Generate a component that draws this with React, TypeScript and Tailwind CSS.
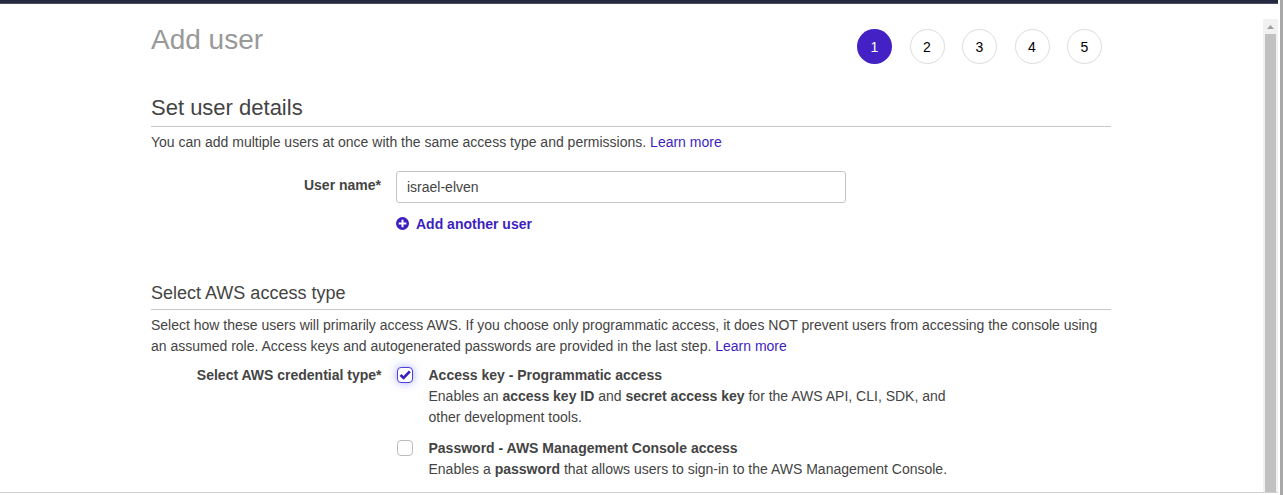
import type { ReactNode } from "react";

const steps = [1, 2, 3, 4, 5];

function Steps({ current }: { current: number }) {
  return (
    <ol className="flex gap-[17.5px]">
      {steps.map((n) => (
        <li
          key={n}
          className={
            n === current
              ? "flex h-[35px] w-[35px] items-center justify-center rounded-full bg-[#4321c4] pt-[2px] text-white"
              : "flex h-[35px] w-[35px] items-center justify-center rounded-full border border-[#dddddd] bg-white pt-[2px] text-black"
          }
        >
          {n}
        </li>
      ))}
    </ol>
  );
}

function Link({ children }: { children: ReactNode }) {
  return (
    <a href="#" className="text-[#3d1fc0]">
      {children}
    </a>
  );
}

function Option({
  title,
  checked,
  children,
}: {
  title: string;
  checked?: boolean;
  children: ReactNode;
}) {
  return (
    <label className="flex">
      <span
        className={
          checked
            ? "mt-[2px] mr-[15.5px] ml-px flex h-4 w-4 shrink-0 items-center justify-center rounded-[4px] border border-[#4a3fe0] bg-white shadow-[0_0_8px_rgba(80,90,255,0.5)]"
            : "mt-[2px] mr-[15.5px] ml-px flex h-4 w-4 shrink-0 items-center justify-center rounded-[4px] border border-[#bbbbbb] bg-white"
        }
      >
        {checked && (
          <svg width="12" height="12" viewBox="0 0 12 12" fill="none">
            <path d="M1.5 6 4.6 8.9 10.8 2.4" stroke="#3d1fc0" strokeWidth="2.8" />
          </svg>
        )}
      </span>
      <span className="block w-[530px]">
        <b className="block">{title}</b>
        <span className="block">{children}</span>
      </span>
    </label>
  );
}

export default function App() {
  return (
    <div className="flex h-[495px] w-[1283px] overflow-hidden bg-white font-['Liberation_Sans',Arial,sans-serif] text-[14px] leading-[21px] text-[#444444]">
      <div className="flex w-[1278px] flex-col">
        <div className="h-1 shrink-0 border-b border-[#4b4c5c] bg-[#262a40]" />
        <div className="flex h-[488px] shrink-0">
          <main className="w-[1263px] pl-[151px]">
            <div className="w-[960px]">
              <header className="flex h-[85px] items-start justify-between pt-[25px] pr-[9px]">
                <h1 className="-mt-[5px] text-[28px] leading-[32px] text-[#999999]">Add user</h1>
                <Steps current={1} />
              </header>

              <section className="h-[187px]">
                <h2 className="h-[38px] border-b border-[#c8c8c8] pt-[6px] text-[22px] leading-[26px]">
                  Set user details
                </h2>
                <p className="mt-[5px]">
                  You can add multiple users at once with the same access type and permissions.{" "}
                  <Link>Learn more</Link>
                </p>
                <div className="mt-[18px] flex">
                  <label htmlFor="user-name" className="w-[230px] pt-[4px] text-right font-bold">
                    User name*
                  </label>
                  <div className="ml-[15px]">
                    <input
                      id="user-name"
                      defaultValue="israel-elven"
                      className="block h-8 w-[450px] rounded-[3px] border border-[#c4c4c4] bg-white px-[10px]"
                    />
                    <button className="mt-[11px] flex items-center font-bold text-[#3d1fc0]">
                      <svg
                        className="-mt-[2px] mr-[7.5px] -ml-[0.5px]"
                        width="13"
                        height="13"
                        viewBox="0 0 13 13"
                      >
                        <circle cx="6.5" cy="6.5" r="6.5" fill="#3d1fc0" />
                        <path d="M6.5 2.7v7.6M2.7 6.5h7.6" stroke="white" strokeWidth="2" />
                      </svg>
                      Add another user
                    </button>
                  </div>
                </div>
              </section>

              <section>
                <h2 className="h-[34px] border-b border-[#c8c8c8] pt-[6px] text-[18px] leading-[22px]">
                  Select AWS access type
                </h2>
                <p className="mt-[5px]">
                  Select how these users will primarily access AWS. If you choose only programmatic
                  access, it does NOT prevent users from accessing the console using an assumed role.
                  Access keys and autogenerated passwords are provided in the last step.{" "}
                  <Link>Learn more</Link>
                </p>
                <div className="mt-[8px] flex">
                  <div className="w-[230.5px] text-right font-bold">Select AWS credential type*</div>
                  <div className="ml-[14.5px] flex flex-col gap-[10px]">
                    <Option title="Access key - Programmatic access" checked>
                      Enables an <b>access key ID</b> and <b>secret access key</b> for the AWS API,
                      CLI, SDK, and other development tools.
                    </Option>
                    <Option title="Password - AWS Management Console access">
                      Enables a <b>password</b> that allows users to sign-in to the AWS Management
                      Console.
                    </Option>
                  </div>
                </div>
              </section>
            </div>
          </main>
          <div className="mt-[15px] flex w-[15px] flex-col items-center bg-[#f1f1f1]">
            <svg className="mt-[6px] mb-[5px] shrink-0" width="7" height="4" viewBox="0 0 7 4">
              <path d="M3.5 0 7 4H0Z" fill="#a0a0a0" />
            </svg>
            <div className="w-[11px] grow bg-[#c1c1c1]" />
          </div>
        </div>
        <div className="h-px shrink-0 bg-[#cfcfcf]" />
      </div>
      <div className="ml-[2px] w-[3px] bg-[#a8a8a8]" />
    </div>
  );
}
